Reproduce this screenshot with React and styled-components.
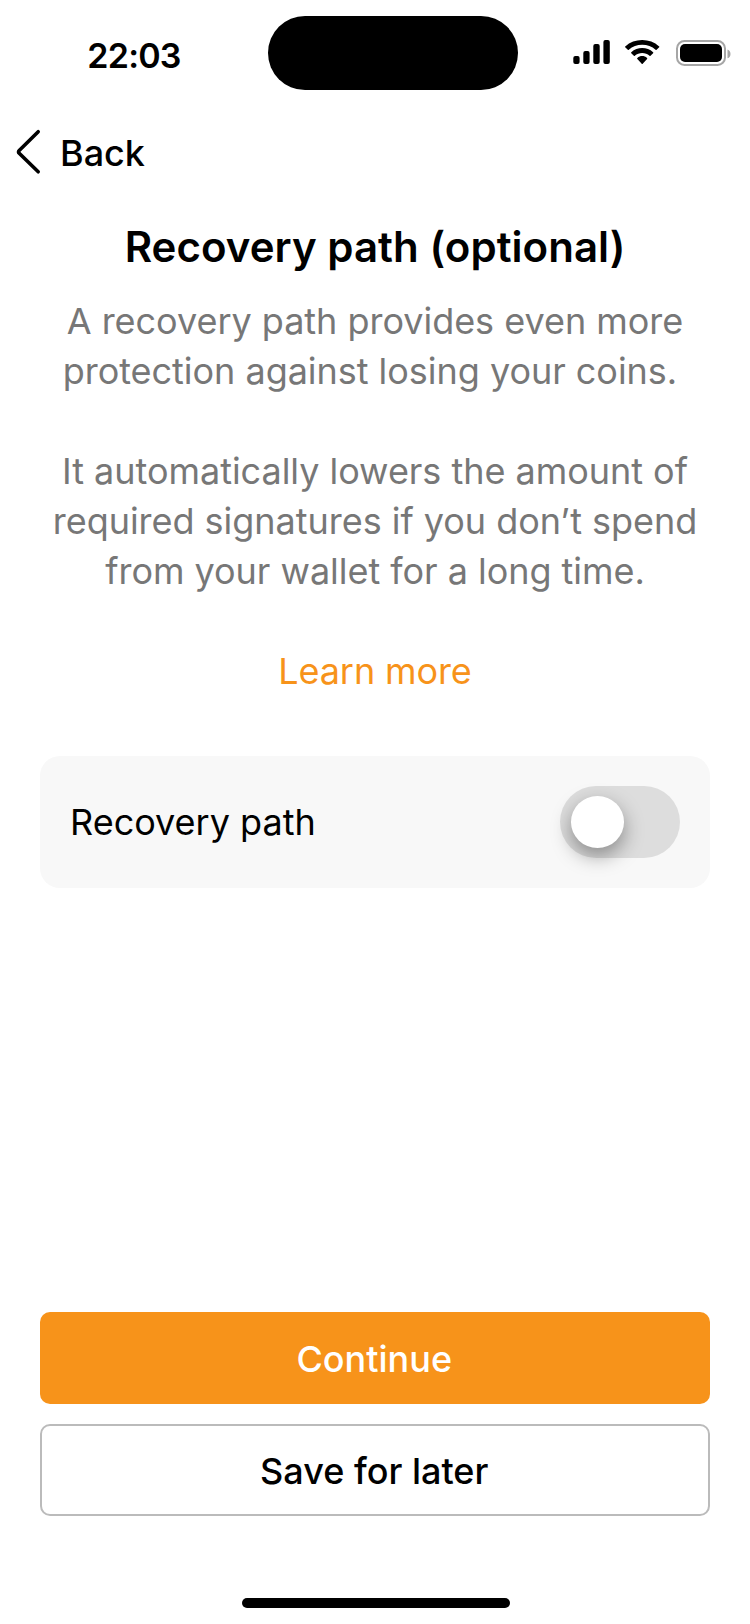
import React, { useState } from "react";
import styled, { createGlobalStyle } from "styled-components";

const GlobalStyle = createGlobalStyle`
  *, *::before, *::after { box-sizing: border-box; }
  body {
    margin: 0;
    background: #fff;
    color: #000;
    font-family: Inter, "Liberation Sans", sans-serif;
  }
  button { font-family: inherit; color: inherit; }
`;

const Screen = styled.div`
  display: flex;
  flex-direction: column;
  width: 750px;
  height: 1624px;
  background: #fff;
`;

const StatusBar = styled.header`
  display: grid;
  grid-template-columns: 268px 250px 1fr;
  padding-top: 16px;
`;

const Clock = styled.time`
  padding-top: 20px;
  text-align: center;
  font-size: 34px;
  line-height: 40px;
  font-weight: 600;
  letter-spacing: -0.8px;
`;

const Island = styled.div`
  height: 74px;
  border-radius: 37px;
  background: #000;
`;

const StatusIcons = styled.div`
  display: flex;
  align-items: flex-start;
  padding: 24px 0 0 55px;
`;

const Signal = styled.svg`
  width: 37px;
  height: 24px;
  margin-right: 15.4px;
`;

const Wifi = styled.svg`
  width: 34.4px;
  height: 24px;
  margin-right: 16px;
`;

const Battery = styled.svg`
  width: 55px;
  height: 26px;
`;

const BackButton = styled.button`
  display: flex;
  align-items: center;
  align-self: flex-start;
  gap: 19px;
  margin: 38px 0 0 16px;
  padding: 0;
  border: 0;
  background: none;
  font-size: 36px;
  line-height: 50px;
  font-weight: 500;
`;

const Chevron = styled.svg`
  width: 25px;
  height: 50px;
`;

const Content = styled.main`
  display: flex;
  flex: 1;
  flex-direction: column;
  padding: 44px 40px 0;
`;

const Title = styled.h1`
  margin: 0 0 24px;
  text-align: center;
  font-size: 42px;
  line-height: 50px;
  font-weight: 600;
  letter-spacing: 0.04px;
`;

const Paragraph = styled.p`
  margin: 0 0 50px;
  text-align: center;
  white-space: pre-wrap;
  color: #777;
  font-size: 36px;
  line-height: 50px;
  letter-spacing: -0.03px;
`;

const LearnMore = styled.a`
  align-self: center;
  margin-bottom: 60px;
  color: #f7931a;
  font-size: 36px;
  line-height: 50px;
  letter-spacing: -0.1px;
`;

const SettingCard = styled.section`
  display: flex;
  align-items: center;
  justify-content: space-between;
  height: 132px;
  padding: 0 30px;
  border-radius: 20px;
  background: #f8f8f8;
  font-size: 36px;
  line-height: 50px;
`;

const Switch = styled.button`
  display: flex;
  align-items: center;
  justify-content: ${(p) => (p.$on ? "flex-end" : "flex-start")};
  width: 120px;
  height: 72px;
  padding: 0 10.5px;
  border: 0;
  border-radius: 36px;
  background: ${(p) => (p.$on ? "#f7931a" : "#ddd")};
`;

const Thumb = styled.span`
  width: 53.5px;
  height: 52px;
  border-radius: 50%;
  background: #fff;
  box-shadow: 0 8px 20px rgba(0, 0, 0, 0.38);
`;

const Actions = styled.footer`
  display: flex;
  flex-direction: column;
  gap: 20px;
  padding: 0 40px;
`;

const ActionButton = styled.button`
  height: 92px;
  padding: 2px 1.5px 0 0;
  border: ${(p) => (p.$primary ? "0" : "2px solid #bbb")};
  border-radius: 10px;
  background: ${(p) => (p.$primary ? "#f7931a" : "#fff")};
  color: ${(p) => (p.$primary ? "#fff" : "#000")};
  font-size: 36px;
  font-weight: 500;
`;

const HomeIndicator = styled.div`
  width: 268px;
  height: 10px;
  margin: 82px 0 16px 242px;
  border-radius: 5px;
  background: #000;
`;

export default function App() {
  const [enabled, setEnabled] = useState(false);
  return (
    <Screen>
      <GlobalStyle />
      <StatusBar>
        <Clock>22:03</Clock>
        <Island />
        <StatusIcons>
          <Signal viewBox="0 0 37 24">
            <rect x="0.3" y="16" width="6.3" height="8" rx="2" />
            <rect x="10.3" y="11" width="6.3" height="13" rx="2" />
            <rect x="20.3" y="4" width="6.4" height="20" rx="2" />
            <rect x="30.4" y="0" width="6.4" height="24" rx="2" />
          </Signal>
          <Wifi viewBox="0 0 17.142 12.328" preserveAspectRatio="none">
            <path d="M8.571 2.466c2.487 0 4.879.922 6.682 2.576.136.128.353.126.486-.004l1.298-1.263a.34.34 0 0 0-.003-.494c-4.731-4.375-12.195-4.375-16.926 0a.34.34 0 0 0-.003.494l1.298 1.263c.133.13.35.132.486.004C3.692 3.388 6.084 2.466 8.571 2.466Z" />
            <path d="M8.568 6.687c1.357 0 2.666.511 3.672 1.435.136.131.35.129.483-.006l1.288-1.319a.36.36 0 0 0-.005-.519c-3.064-2.867-7.809-2.867-10.873 0a.36.36 0 0 0-.005.519l1.287 1.319c.133.135.347.137.483.006 1.006-.923 2.313-1.435 3.67-1.435Z" />
            <path d="M11.092 9.48a.4.4 0 0 1-.102.281l-2.177 2.455a.322.322 0 0 1-.483 0L6.153 9.761a.4.4 0 0 1 .011-.557c1.39-1.314 3.426-1.314 4.816 0a.4.4 0 0 1 .112.276Z" />
          </Wifi>
          <Battery viewBox="0 0 55 26">
            <rect x="1" y="1" width="48" height="24" rx="7.5" fill="none" stroke="#a6a6a6" strokeWidth="2" />
            <rect x="4" y="4" width="42" height="18" rx="5" />
            <path d="M51.5 9.5c4 1.2 4 7.6 0 8.8Z" fill="#a6a6a6" />
          </Battery>
        </StatusIcons>
      </StatusBar>
      <BackButton>
        <Chevron viewBox="0 0 25 50" fill="none" stroke="#000" strokeWidth="3.6" strokeLinecap="round">
          <path d="M22.2 3.7 3.2 22.5Q1.8 23.9 3.2 25.3L22.2 43.8" />
        </Chevron>
        Back
      </BackButton>
      <Content>
        <Title>Recovery path (optional)</Title>
        <Paragraph>{"A recovery path provides even more\nprotection against losing your coins. "}</Paragraph>
        <Paragraph>{"It automatically lowers the amount of\nrequired signatures if you don’t spend\nfrom your wallet for a long time."}</Paragraph>
        <LearnMore>Learn more</LearnMore>
        <SettingCard>
          Recovery path
          <Switch $on={enabled} role="switch" aria-checked={enabled} aria-label="Recovery path" onClick={() => setEnabled(!enabled)}>
            <Thumb />
          </Switch>
        </SettingCard>
      </Content>
      <Actions>
        <ActionButton $primary>Continue</ActionButton>
        <ActionButton>Save for later</ActionButton>
      </Actions>
      <HomeIndicator />
    </Screen>
  );
}
